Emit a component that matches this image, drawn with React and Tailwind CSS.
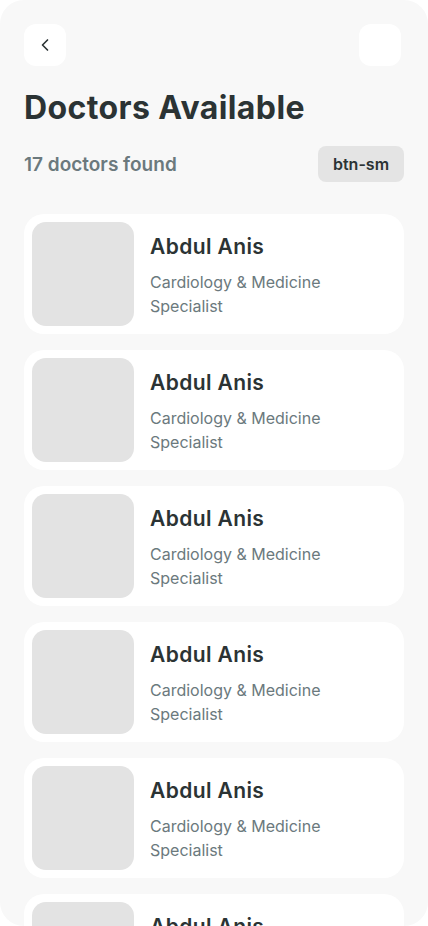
import React from 'react';
import { ChevronLeft } from 'lucide-react';

const doctors = Array.from({ length: 6 }, (_, i) => ({
  id: i,
  name: 'Abdul Anis',
  specialty: 'Cardiology & Medicine Specialist',
}));

function DoctorCard({ doctor }) {
  return (
    <div className="flex items-center gap-4 bg-white rounded-[20px] p-2 h-[120px] shrink-0">
      <div className="w-[102px] h-[104px] rounded-[14px] bg-[#e3e3e3] shrink-0" />
      <div className="flex flex-col pr-6 pt-[2px]">
        <div className="text-[21px] leading-7 font-semibold tracking-[0.4px] text-[#2b3334]">{doctor.name}</div>
        <div className="mt-[9px] w-[190px] text-[16px] leading-6 text-[#6b797d]">{doctor.specialty}</div>
      </div>
    </div>
  );
}

export default function App() {
  return (
    <div className="w-[428px] h-[926px] bg-white" style={{ fontFamily: 'Inter, "Noto Sans", sans-serif' }}>
      <div className="h-full bg-[#f8f8f8] rounded-[24px] overflow-hidden pl-6 pr-6 pt-6">
        {/* Header */}
        <div className="flex justify-between items-center pr-[3px]">
          <button className="w-[42px] h-[42px] rounded-xl bg-white flex items-center justify-center text-[#2b3334]">
            <ChevronLeft className="w-5 h-5" strokeWidth={2} />
          </button>
          <button className="w-[42px] h-[42px] rounded-xl bg-white" />
        </div>

        <h1 className="mt-[24px] text-[32px] leading-9 font-bold tracking-[0.4px] text-[#2b3334]">Doctors Available</h1>

        <div className="mt-[20px] flex justify-between items-center">
          <span className="mt-[3px] text-[19px] font-semibold text-[#6b797d]">17 doctors found</span>
          <button className="w-[86px] h-9 rounded-lg bg-[#e4e4e4] text-[16px] font-semibold text-[#2b3334]">btn-sm</button>
        </div>

        {/* List */}
        <div className="mt-8 flex flex-col gap-4">
          {doctors.map((d) => (
            <DoctorCard key={d.id} doctor={d} />
          ))}
        </div>
      </div>
    </div>
  );
}
